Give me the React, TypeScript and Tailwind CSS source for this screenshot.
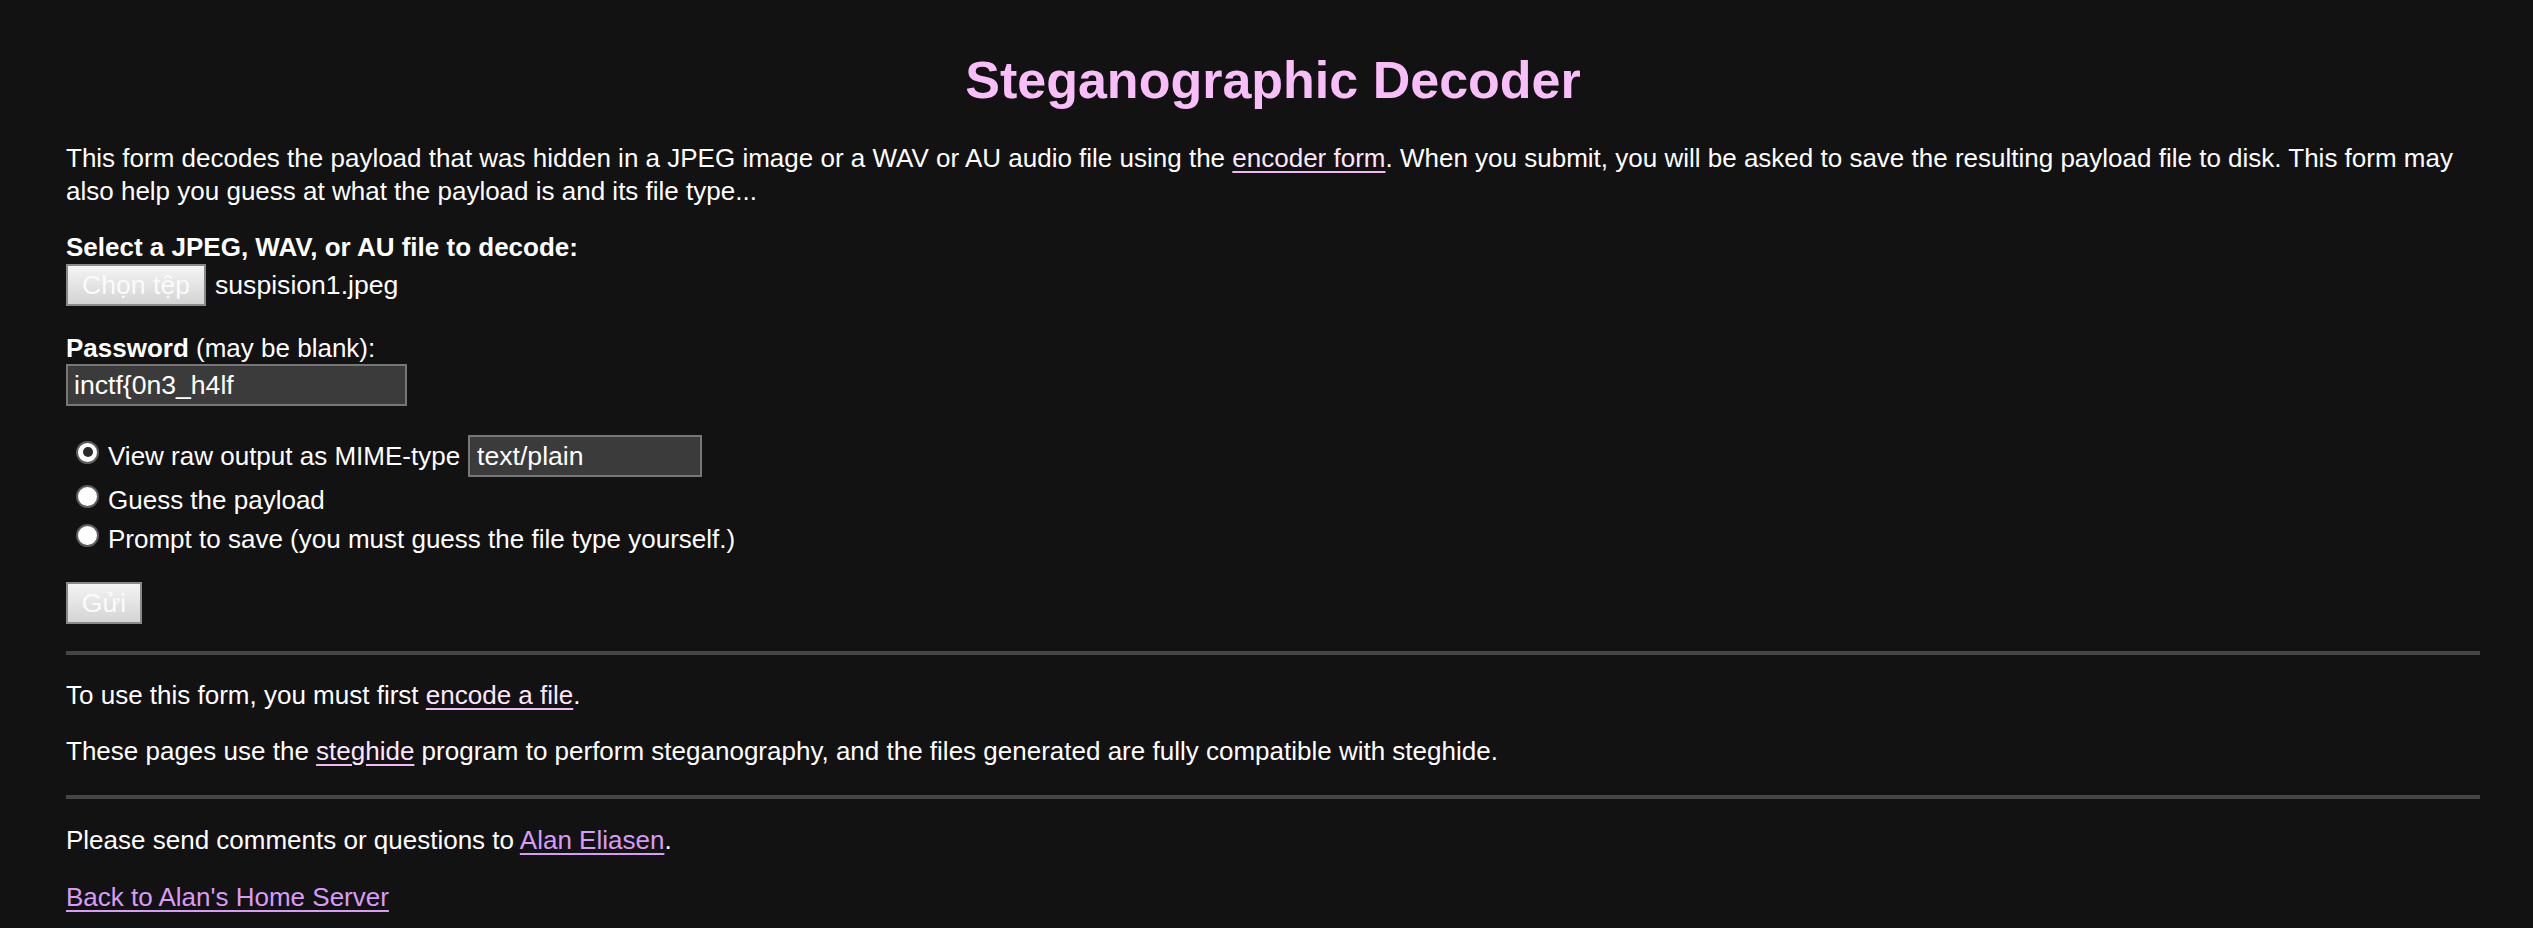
export default function App() {
  return (
    <div className="min-h-screen bg-[#121212] text-white font-['Liberation_Sans',Arial,sans-serif] text-[26px] leading-[29.4px] pl-[66px] pr-[53px] pt-[51px] pb-[20px]">
      <h1 className="text-[52px] leading-[59px] font-bold text-center text-[#f9bdfa]">Steganographic Decoder</h1>

      <p className="mt-[32px] leading-[33px]">
        This form decodes the payload that was hidden in a JPEG image or a WAV or AU audio file using the{' '}
        <a href="#" className="text-[#fde6fd] underline underline-offset-[4px] decoration-[#f2b8f4]">encoder form</a>. When you
        submit, you will be asked to save the resulting payload file to disk. This form may also help you guess at what the
        payload is and its file type...
      </p>

      <form onSubmit={(e) => e.preventDefault()}>
        <div className="mt-[25px] font-bold">Select a JPEG, WAV, or AU file to decode:</div>
        <div className="mt-[2px] flex items-center gap-[9px] h-[42px] text-[26.6px]">
          <button
            type="button"
            className="w-[140px] h-[42px] border-2 border-[#8a8a8a] bg-gradient-to-b from-[#f4f4f4] to-[#d4d4d4] text-[#fbfbfb]"
          >
            Chọn tệp
          </button>
          <span>suspision1.jpeg</span>
        </div>

        <div className="mt-[28px]">
          <b>Password</b> (may be blank):
        </div>
        <input
          type="text"
          defaultValue="inctf{0n3_h4lf"
          className="mt-[0.5px] block w-[341px] h-[42px] border-2 border-[#777] bg-[#3b3b3b] pl-[6px] text-[26.6px] text-white outline-none"
        />

        <div className="mt-[29px] pl-[10px]">
          <div className="flex items-center h-[42px]">
            <Radio checked />
            <span className="ml-[9px]">View raw output as MIME-type</span>
            <input
              type="text"
              defaultValue="text/plain"
              className="ml-[8px] w-[234px] h-[42px] border-2 border-[#777] bg-[#3b3b3b] pl-[7px] text-[26.6px] text-white outline-none"
            />
          </div>
          <div className="mt-[3.6px] flex items-center h-[39px]">
            <Radio />
            <span className="ml-[9px]">Guess the payload</span>
          </div>
          <div className="flex items-center h-[39px]">
            <Radio />
            <span className="ml-[9px]">Prompt to save (you must guess the file type yourself.)</span>
          </div>
        </div>

        <button
          type="submit"
          className="mt-[23.4px] block w-[76px] h-[42px] border-2 border-[#8a8a8a] bg-gradient-to-b from-[#f4f4f4] to-[#d4d4d4] text-[#fbfbfb] text-[26.6px]"
        >
          Gửi
        </button>
      </form>

      <div className="mt-[27px] h-[4px] bg-[#454545]" />

      <p className="mt-[25.7px]">
        To use this form, you must first{' '}
        <a href="#" className="text-[#fde6fd] underline underline-offset-[4px] decoration-[#f2b8f4]">encode a file</a>.
      </p>
      <p className="mt-[27px]">
        These pages use the{' '}
        <a href="#" className="text-[#fde6fd] underline underline-offset-[4px] decoration-[#f2b8f4]">steghide</a> program to
        perform steganography, and the files generated are fully compatible with steghide.
      </p>

      <div className="mt-[28.5px] h-[4px] bg-[#454545]" />

      <p className="mt-[26.4px]">
        Please send comments or questions to{' '}
        <a href="#" className="text-[#d99bf7] underline underline-offset-[4px]">Alan Eliasen</a>.
      </p>
      <p className="mt-[27.6px]">
        <a href="#" className="text-[#d99bf7] underline underline-offset-[4px]">Back to Alan's Home Server</a>
      </p>
    </div>
  );
}

function Radio({ checked = false }: { checked?: boolean }) {
  return (
    <span className="mb-[8px] flex items-center justify-center w-[23px] h-[23px] shrink-0 rounded-full border-2 border-[#5c5c5c] bg-white">
      {checked && <span className="w-[10px] h-[10px] rounded-full bg-[#2a2a2a]" />}
    </span>
  );
}
